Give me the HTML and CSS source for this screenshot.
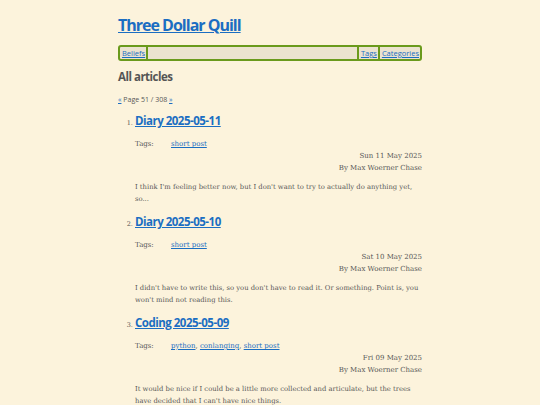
FILE: index.html
```html
<!DOCTYPE html>
<html>
<head>
<meta charset="utf-8">
<link rel="stylesheet" href="styles.css">
</head>
<body>
<div class="page">
  <header class="site-header">
    <h1 class="site-title"><a href="#">Three Dollar Quill</a></h1>
    <nav class="nav">
      <a class="nav-item nav-left" href="#">Beliefs</a>
      <span class="nav-spacer"></span>
      <a class="nav-item nav-right" href="#">Tags</a>
      <a class="nav-item nav-right" href="#">Categories</a>
    </nav>
  </header>
  <h2 class="section-title">All articles</h2>
  <p class="pager"><a href="#">«</a> Page 51 / 308 <a href="#">»</a></p>
  <ol class="articles" start="1">
    <li class="article">
      <h3 class="article-title"><a href="#">Diary 2025-05-11</a></h3>
      <div class="tags"><span class="tags-label">Tags:</span><span class="tags-list"><a href="#">short post</a></span></div>
      <div class="meta"><div>Sun 11 May 2025</div><div>By Max Woerner Chase</div></div>
      <p class="summary">I think I'm feeling better now, but I don't want to try to actually do anything yet, so...</p>
    </li>
    <li class="article">
      <h3 class="article-title"><a href="#">Diary 2025-05-10</a></h3>
      <div class="tags"><span class="tags-label">Tags:</span><span class="tags-list"><a href="#">short post</a></span></div>
      <div class="meta"><div>Sat 10 May 2025</div><div>By Max Woerner Chase</div></div>
      <p class="summary">I didn't have to write this, so you don't have to read it. Or something. Point is, you won't mind not reading this.</p>
    </li>
    <li class="article">
      <h3 class="article-title"><a href="#">Coding 2025-05-09</a></h3>
      <div class="tags"><span class="tags-label">Tags:</span><span class="tags-list"><a href="#">python</a>, <a href="#">conlanging</a>, <a href="#">short post</a></span></div>
      <div class="meta"><div>Fri 09 May 2025</div><div>By Max Woerner Chase</div></div>
      <p class="summary">It would be nice if I could be a little more collected and articulate, but the trees have decided that I can't have nice things.</p>
    </li>
  </ol>
</div>
</body>
</html>
```
FILE: styles.css
```css
html, body {
  margin: 0;
  padding: 0;
  background: #fcf3dc;
}
body {
  font-family: "DejaVu Serif", serif;
  color: #575757;
}
a {
  color: #1b6ec2;
}
.page {
  width: 304px;
  margin: 0 auto;
  padding-top: 14px;
}
.site-title {
  margin: 0;
  font-family: "Open Sans", sans-serif;
  font-weight: 700;
  font-size: 16px;
  line-height: 22px;
  letter-spacing: -1px;
}
.nav {
  display: flex;
  margin-top: 9px;
  border: 2px solid #6a9a1c;
  border-radius: 3px;
  background: #ebe3cf;
  font-family: "Open Sans", sans-serif;
  font-size: 7.5px;
  line-height: 12px;
}
.nav-item {
  padding: 0 1px 0 2px;
}
.nav-left {
  border-right: 2px solid #6a9a1c;
}
.nav-right {
  border-left: 2px solid #6a9a1c;
}
.nav-spacer {
  flex: 1;
}
.section-title {
  margin: 8px 0 0;
  font-family: "Open Sans", sans-serif;
  font-weight: 700;
  font-size: 11.5px;
  line-height: 16px;
  color: #555;
  letter-spacing: -0.5px;
}
.pager {
  margin: 10px 0 0;
  font-family: "Open Sans", sans-serif;
  font-size: 7px;
  line-height: 10px;
}
.articles {
  margin: 8px 0 0;
  padding-left: 17px;
  font-size: 7px;
}
.article {
  margin-bottom: 9px;
}
.article::marker {
  font-family: "DejaVu Serif", serif;
  font-size: 6.5px;
  color: #555;
}
.article-title {
  margin: 0;
  font-family: "Open Sans", sans-serif;
  font-weight: 700;
  font-size: 11.5px;
  line-height: 16px;
  letter-spacing: -0.5px;
}
.tags {
  display: grid;
  grid-template-columns: 36px 1fr;
  margin-top: 9px;
  font-size: 7px;
  line-height: 12px;
}
.meta {
  margin-top: 0;
  text-align: right;
  font-size: 7px;
  line-height: 12px;
}
.summary {
  margin: 7px 0 0;
  font-size: 6.8px;
  line-height: 12px;
}
```
